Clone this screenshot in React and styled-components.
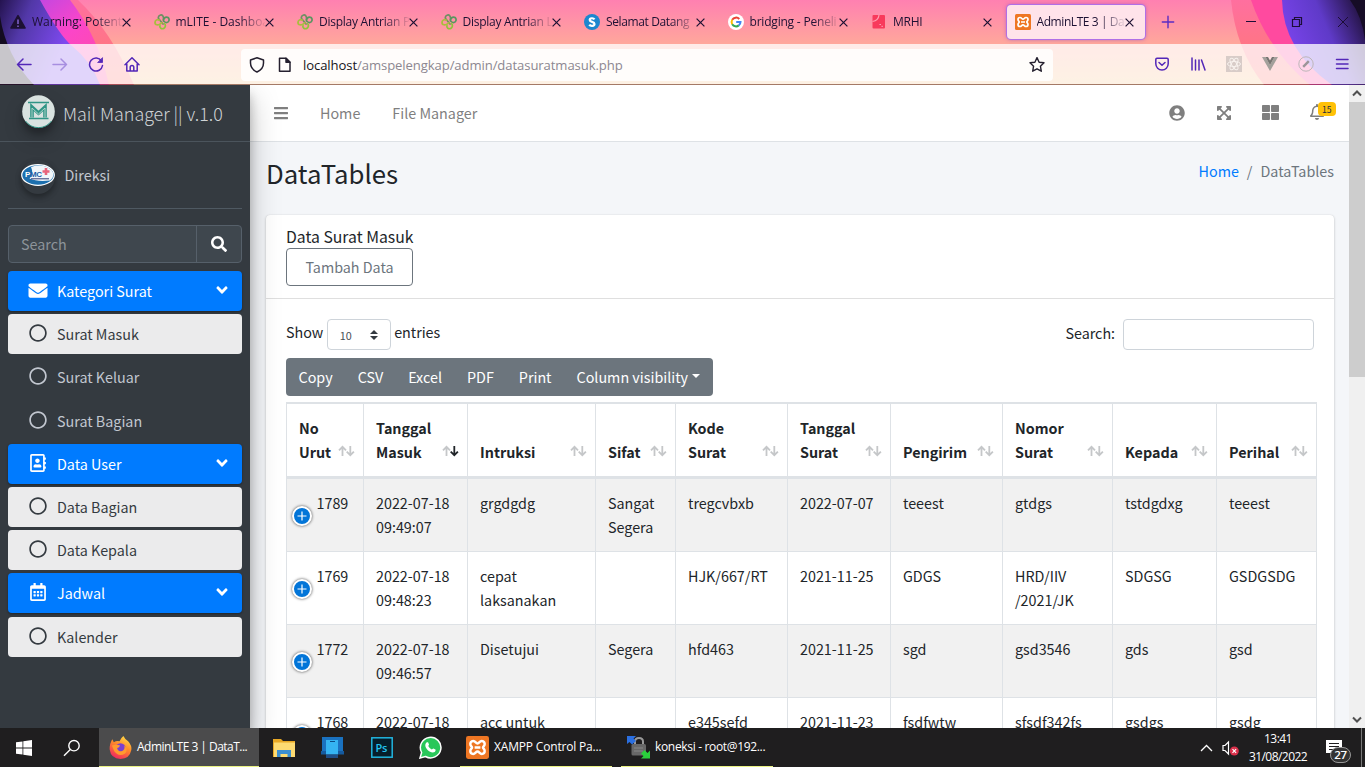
import React from "react";
import styled, { createGlobalStyle, css } from "styled-components";
import {
  FaEnvelope, FaRegAddressBook, FaRegCalendarAlt, FaRegCircle, FaAngleDown, FaSearch,
  FaBars, FaUserCircle, FaExpandArrowsAlt, FaThLarge, FaRegBell,
} from "react-icons/fa";

const sans = `"Noto Sans CJK SC", "Noto Sans", sans-serif`;
const ui = `"Open Sans", "Noto Sans", sans-serif`;

const Global = createGlobalStyle`
  *, *::before, *::after { box-sizing: border-box; }
  html, body { margin: 0; padding: 0; overflow: hidden; }
  body { font-family: ${sans}; font-size: 14.33px; line-height: 24px; color: #212529; }
  svg { display: block; flex: none; }
`;

const Screen = styled.div`
  width: 1365px; height: 767px; display: flex; flex-direction: column; overflow: hidden;
`;

/* ---------- browser chrome ---------- */
const Chrome = styled.header`
  position: relative; height: 85px; flex: none; font-family: ${ui}; overflow: hidden;
`;
const ThemeArt = styled.svg`position: absolute; inset: 0;`;
const TabStrip = styled.div`
  position: relative; height: 44px; display: flex; align-items: center; padding-left: 2px;
`;
const TabItem = styled.div`
  width: 139.5px; margin-right: 4px; height: 36px; flex: none; display: flex; align-items: center;
  padding: 0 11px 0 8px; border-radius: 4px; color: #1d1133;
  ${(p) => p.$active && css`
    width: 138.5px; height: 34px; margin: 0 1px 0 0; background: #ffe3ea;
    box-shadow: 0 0 0 1px #b06fe6, 0 0 4px rgba(120, 60, 200, .7);
  `}
`;
const TabTitle = styled.span`
  flex: 1; margin-left: 6px; white-space: nowrap; overflow: hidden; font-size: 12px; line-height: 18px;
  letter-spacing: ${(p) => p.$ls || "-0.25px"};
  mask-image: linear-gradient(to right, #000 calc(100% - 26px), transparent calc(100% + 2px));
`;
const NewTab = styled.div`width: 44px; display: flex; justify-content: center; color: #5b2cc4;`;
const WindowButtons = styled.div`
  margin-left: auto; display: flex; align-items: center; color: #1c0d36;
  svg { width: 46px; }
`;
const Toolbar = styled.div`
  position: relative; height: 40px; display: flex; align-items: center; background: rgba(255, 255, 255, .77);
  color: #5327b8;
`;
const NavButtons = styled.div`display: flex; gap: 20px; padding-left: 16px; width: 241px;`;
const UrlField = styled.div`
  width: 812px; height: 32px; border-radius: 4px; background: rgba(255, 255, 255, .84); display: flex;
  align-items: center; padding: 0 8px; color: #25202f; margin-top: 1px;
`;
const PageIcon = styled.span`margin-left: 12px;`;
const UrlText = styled.span`
  flex: 1; margin-left: 10px; font-size: 13.1px; line-height: 20px; color: #8c8790; letter-spacing: -0.09px;
  b { font-weight: 400; color: #15141a; }
`;
const ToolButtons = styled.div`
  display: flex; align-items: center; gap: 20px; margin-left: auto; padding-right: 15px;
`;

/* ---------- page ---------- */
const Page = styled.div`flex: 1; display: flex; min-height: 0; overflow: hidden;`;
const Sidebar = styled.aside`
  width: 250px; flex: none; background: #343a40; position: relative; z-index: 2; color: #c2c7d0;
  box-shadow: 0 14px 28px rgba(0, 0, 0, .25), 0 10px 10px rgba(0, 0, 0, .22);
`;
const Brand = styled.div`
  height: 57px; border-bottom: 1px solid #4b545c; display: flex; align-items: center; padding: 0 0 3px 22px;
  font-size: 17.9px; font-weight: 300; color: #d0d3d6;
  span { margin: 2px 0 0 8px; white-space: nowrap; letter-spacing: -0.03px; }
`;
const RoundLogo = styled.div`
  width: 33px; height: 33px; border-radius: 50%;
  box-shadow: 0 10px 20px rgba(0, 0, 0, .19), 0 6px 6px rgba(0, 0, 0, .23);
`;
const SideBody = styled.div`padding: 0 8px;`;
const UserPanel = styled.div`
  height: 67px; border-bottom: 1px solid #4f5962; display: flex; align-items: center; padding-left: 13px;
  margin-bottom: 16px;
  span { margin-left: 9.500px; }
`;
const Avatar = styled.div`
  width: 34px; height: 34px; border-radius: 50%; display: flex; padding-top: 4px; margin-top: 3px;
  box-shadow: 0 3px 6px rgba(0, 0, 0, .16), 0 3px 6px rgba(0, 0, 0, .23);
`;
const SideSearch = styled.div`
  height: 38px; border: 1px solid #56606a; border-radius: 4px; background: #3f474e; display: flex;
  margin-bottom: 8px; color: #8d949a;
  > span { flex: 1; padding: 6px 12px; }
  > div { width: 45px; border-left: 1px solid #56606a; display: flex; align-items: center; justify-content: center; color: #fff; }
`;
const tones = {
  blue: css`background: #007bff; color: #fff; box-shadow: 0 1px 3px rgba(0, 0, 0, .12), 0 1px 2px rgba(0, 0, 0, .24);`,
  light: css`background: #ebebec; color: #343a40;`,
  plain: css`color: #c2c7d0;`,
};
const MenuRow = styled.div`
  height: 40px; margin-bottom: 3.2px; border-radius: 4px; display: flex; align-items: center; padding: 0 11px 0 20px;
  ${(p) => tones[p.$tone]}
  > svg:first-child { margin-top: -2px; width: 20px; }
  > span { flex: 1; margin-left: 9px; }
  > svg:last-child:not(:first-child) { margin-top: -2px; }
`;

const Main = styled.main`flex: 1; min-width: 0; background: #f4f6f9; overflow: hidden;`;
const Navbar = styled.nav`
  height: 57px; background: #fff; border-bottom: 1px solid #dee2e6; display: flex; align-items: center;
  padding: 0 14px 0 23px; color: #7f7f7f;
`;
const NavLink = styled.span`margin-left: ${(p) => p.$gap}px;`;
const NavIcons = styled.div`margin-left: auto; display: flex; align-items: center; margin-top: -1px;`;
const NavIcon = styled.div`width: 47px; height: 24px; display: flex; justify-content: center; align-items: center;`;
const Bell = styled.div`position: relative; margin-left: 15px; width: 26px; height: 18px;`;
const Badge = styled.span`
  position: absolute; left: 9px; top: -2px; height: 14px; padding: 0 4px; border-radius: 4px; background: #ffc107;
  color: #1f2d3d; font-size: 8.6px; line-height: 14px;
`;
const PageHead = styled.div`
  height: 72px; padding: 14px 15px 0 16px; display: flex; justify-content: space-between; margin-bottom: 1px;
`;
const Title = styled.h1`margin: -1px 0 0; font-size: 25.75px; line-height: 35px; font-weight: 400;`;
const Crumbs = styled.div`
  color: #6c757d; line-height: 30px; a { color: #007bff; } i { font-style: normal; padding: 0 8px; }
`;
const Card = styled.section`
  margin: 0 15px 0 16px; height: 600px; background: #fff; border-radius: 4px;
  box-shadow: 0 0 1px rgba(0, 0, 0, .125), 0 1px 3px rgba(0, 0, 0, .2);
`;
const CardHead = styled.div`
  height: 84px; padding: 11px 20px 0; border-bottom: 1px solid #dfdfdf;
`;
const CardTitle = styled.div`font-size: 15.76px; line-height: 21px; margin-bottom: 1px;`;
const OutlineButton = styled.button`
  display: block; width: 127px; height: 38px; border: 1px solid #6c757d; border-radius: 4px; background: #fff;
  color: #6c757d; font: inherit; padding: 0;
`;
const CardBody = styled.div`padding: 20px;`;
const Controls = styled.div`
  display: flex; align-items: center; height: 31px; margin-bottom: 8px; letter-spacing: -0.04px;
  > span { margin-top: -5px; }
`;
const Select = styled.div`
  width: 64px; height: 31px; margin: 0 3.500px; border: 1px solid #ced4da; border-radius: 4px; display: flex;
  align-items: center; justify-content: space-between; padding: 0 12px; font-size: 10.8px; color: #495057;
`;
const SearchBox = styled.label`
  margin-left: auto; display: flex; align-items: center; gap: 8px;
  span { margin-top: -3px; }
  div { width: 191px; height: 31px; border: 1px solid #ced4da; border-radius: 4px; }
`;
const ButtonGroup = styled.div`
  display: inline-flex; height: 38px; border-radius: 4px; background: #6c757d; color: #fff; margin-bottom: 6px;
  vertical-align: top;
`;
const GroupButton = styled.div`
  padding: 7px 12.5px; display: flex; align-items: center; white-space: nowrap;
  &::after {
    content: ""; display: ${(p) => (p.$caret ? "block" : "none")}; margin: -2px 0 0 4px;
    border: 4.6px solid transparent; border-top-color: #fff; border-bottom: 0;
  }
`;
const Table = styled.table`
  width: 1031px; table-layout: fixed; border-spacing: 0; border-right: 1px solid #dee2e6;
`;
const Th = styled.th`
  width: ${(p) => p.$w}px; height: 77px; padding: 12px 8px 12px 12px; border-left: 1px solid #dee2e6;
  border-top: 2px solid #dee2e6; border-bottom: 3px solid #dee2e6; text-align: left; vertical-align: bottom;
  font-weight: 700;
`;
const HeadInner = styled.div`
  display: flex; justify-content: space-between; align-items: flex-end; white-space: pre;
  svg { margin-bottom: 7px; }
`;
const Tr = styled.tr`background: ${(p) => (p.$odd ? "#f1f1f1" : "#fff")};`;
const Td = styled.td`
  position: relative; height: ${(p) => (p.$first ? 72 : 73)}px; vertical-align: top; white-space: pre;
  padding: 12px 0 0 ${(p) => (p.$lead ? 29.5 : 12)}px; border-left: 1px solid #dee2e6;
  border-top: ${(p) => (p.$first ? 0 : 1)}px solid #dee2e6;
`;
const Expand = styled.span`
  position: absolute; left: 5px; top: 50%; margin-top: -9px; width: 20px; height: 20px; border-radius: 50%;
  border: 2px solid #fff; background: #0275d8; box-shadow: 0 0 3px #444; display: flex; align-items: center;
  justify-content: center;
`;

const Scrollbar = styled.div`
  width: 16px; flex: none; background: #f0f0f0; display: flex; flex-direction: column; align-items: center;
  justify-content: space-between;
`;
const Thumb = styled.div`width: 16px; height: 275px; background: #cdcdcd; margin-bottom: auto;`;
const ScrollArrow = styled.div`height: 17px; display: flex; align-items: center;`;

/* ---------- taskbar ---------- */
const Taskbar = styled.footer`
  height: 39px; flex: none; background: #1f1e1f; display: flex; color: #fff; font-family: ${ui}; font-size: 12px;
  letter-spacing: -0.3px;
`;
const TaskIcon = styled.div`width: ${(p) => p.$w || 49}px; display: flex; align-items: center; justify-content: center;`;
const Task = styled.div`
  width: ${(p) => p.$w}px; margin-right: ${(p) => p.$gap || 0}px; padding: 0 0 0 ${(p) => p.$pad}px; display: flex;
  align-items: center; background: ${(p) => (p.$active ? "#4b4b4c" : "transparent")};
  border-bottom: 1px solid #e9f284; white-space: nowrap;
  span { margin-left: 5px; letter-spacing: ${(p) => p.$ls}px; }
`;
const Tray = styled.div`
  margin-left: auto; display: flex; align-items: center;
  > svg:first-child { margin-right: 9px; }
`;
const Clock = styled.div`
  width: 70px; text-align: center; line-height: 18px; margin: 0 13px 0 3px; letter-spacing: -0.55px;
`;
const Notice = styled.div`
  position: relative; width: 36px; height: 39px; padding-top: 12px; border-right: 1px solid #777;
`;
const NoticeCount = styled.span`
  position: absolute; left: 4px; top: 19px; width: 21px; height: 16px; border-radius: 8px; border: 1px solid #999;
  background: #333; font-weight: 600; font-size: 11.5px; line-height: 14px; text-align: center;
`;

const Art = () => (
  <ThemeArt width="1365" height="85" viewBox="0 0 1365 85">
    <defs>
      <linearGradient id="sky" x1="0" y1="0" x2="0" y2="1">
        <stop offset="0" stopColor="#ff80b1" /><stop offset=".5" stopColor="#ffa69c" /><stop offset="1" stopColor="#f6c58a" />
      </linearGradient>
      <linearGradient id="orange" x1="0" y1="0" x2="0" y2="1">
        <stop offset="0" stopColor="#ff6f9f" /><stop offset="1" stopColor="#ff7a70" />
      </linearGradient>
      <linearGradient id="mag" x1="0" y1="0" x2="1" y2="1">
        <stop offset="0" stopColor="#a648ee" /><stop offset=".5" stopColor="#fb45c9" /><stop offset="1" stopColor="#ff4f9a" />
      </linearGradient>
      <linearGradient id="pur" gradientUnits="userSpaceOnUse" x1="0" y1="0" x2="70" y2="30">
        <stop offset="0" stopColor="#24134f" /><stop offset=".4" stopColor="#5238a8" /><stop offset="1" stopColor="#7d49ee" />
      </linearGradient>
      <linearGradient id="purR" gradientUnits="userSpaceOnUse" x1="1282" y1="34" x2="1362" y2="0">
        <stop offset="0" stopColor="#7a44ec" /><stop offset=".5" stopColor="#5f3ac8" /><stop offset=".95" stopColor="#22123f" />
      </linearGradient>
    </defs>
    <rect width="1365" height="85" fill="url(#sky)" />
    <path d="M0 0H78Q112 32 134 85H0Z" fill="url(#orange)" />
    <path d="M0 0H70Q98 36 109 85H0Z" fill="url(#mag)" />
    <path d="M0 0H40Q60 36 72 46Q92 62 100 85H0Z" fill="url(#pur)" />
    <path d="M0 16Q6 56 34 85H0Z" fill="#140c20" />
    <path d="M1231 0Q1236 50 1264 85H1365V0Z" fill="url(#orange)" />
    <path d="M1251 0Q1268 50 1310 85H1365V0Z" fill="#ff4a9f" />
    <path d="M1282 0Q1283 50 1332 85H1365V0Z" fill="url(#purR)" />
    <path d="M1350 0Q1362 16 1365 40V0Z" fill="#160c26" />
    <rect y="84" width="1365" height="1" fill="#40203a" opacity=".45" />
  </ThemeArt>
);

const X = ({ s = 9 }) => (
  <svg width={s} height={s} viewBox="0 0 9 9" stroke="currentColor" strokeWidth="1.2"><path d="M.6 .6l7.8 7.8M8.400 .6L.6 8.400" /></svg>
);
const Icon = ({ children, size = 16, ...r }) => (
  <svg width={size} height={size} viewBox="0 0 16 16" fill="none" stroke="currentColor" strokeWidth="1.3" strokeLinecap="round" strokeLinejoin="round" {...r}>{children}</svg>
);
const Clover = () => (
  <Icon strokeWidth="1.7">
    <path d="M9 10L5.300 5.500A2.500 2.500 0 0 1 6 1.200C8.200 .2 9.600 2 9.500 4.500V6.500" stroke="#6f8f63" />
    <path d="M9.500 5.500C10 3.500 12.500 2.500 14 3.500C15.800 5 15.300 8 13 8.500C11.500 8.800 10.500 8 9.500 7" stroke="#5a9560" />
    <path d="M5.500 6.200C3 4.800 .8 6.500 1 9C1.300 11 3.800 11.300 5.800 10.200L8 8.800" stroke="#a9bd3e" />
    <path d="M10.500 9.500C12 11 11.500 13.500 9.800 14.400C7.500 15.400 5.500 14 6 11.800" stroke="#8fc43a" />
  </Icon>
);
const Xampp = ({ size = 16 }) => (
  <svg width={size} height={size} viewBox="0 0 16 16">
    <rect width="16" height="16" rx="1.500" fill="#ee7623" />
    <path d="M5 3.500C3.300 3.500 3 5 3 5.500C3 7 4.200 7.200 4.200 8S3 9 3 10.500C3 11.500 3.500 12.500 5 12.500S6.800 10.800 8 10.800S9.500 12.500 11 12.500S13 11.500 13 10.500C13 9 11.800 8.800 11.800 8S13 7 13 5.500C13 5 12.700 3.500 11 3.500S9.200 5.200 8 5.200S6.700 3.500 5 3.500Z M6 8H10" fill="none" stroke="#fff" strokeWidth="1.700" strokeLinejoin="round" />
  </svg>
);
const favicons = {
  warn: <svg width="16" height="16" viewBox="0 0 16 16"><path d="M8 1.700L15 14H1Z" fill="#1d1133" stroke="#1d1133" strokeWidth="1.600" strokeLinejoin="round" /><path d="M8 5.500v4.500M8 11.500v1.500" stroke="#8a68dc" strokeWidth="1.400" /></svg>,
  clover: <Clover />,
  s: <svg width="16" height="16" viewBox="0 0 16 16"><circle cx="8" cy="8" r="8" fill="#1c87cf" /><path d="M10.500 5.300C9.500 3.800 5.700 3.800 5.700 6C5.700 8.200 10.500 7.600 10.500 10C10.500 12.300 6.300 12.300 5.300 10.600" fill="none" stroke="#fff" strokeWidth="2.200" /></svg>,
  g: <svg width="16" height="16" viewBox="0 0 16 16" fill="none" strokeWidth="2"><circle cx="8" cy="8" r="8" fill="#fff" /><path d="M11.300 5A4.500 4.500 0 0 0 4.200 5.800" stroke="#ea4335" /><path d="M4.200 5.800A4.500 4.500 0 0 0 4.200 10.300" stroke="#fbbc05" /><path d="M4.200 10.300A4.500 4.500 0 0 0 10.800 11.400" stroke="#34a853" /><path d="M10.800 11.400A4.500 4.500 0 0 0 12.500 8H8.200" stroke="#4285f4" /></svg>,
  m: <svg width="16" height="16" viewBox="0 0 16 16"><rect x="1.500" y="1" width="12.500" height="13.500" rx="1" fill="#f83a5c" /><path d="M1.500 7.500Q7.500 6.500 8 1" fill="none" stroke="#ff9db0" strokeWidth="1.200" /><path d="M8.500 10.500h1.300M10.500 12.300h1.300" stroke="#ffb5c2" strokeWidth="1" /></svg>,
  x: <Xampp />,
};
const tabs = [
  ["warn", "Warning: Potenti", "-0.02px"], ["clover", "mLITE - Dashboard", "-0.02px"], ["clover", "Display Antrian Pe"], ["clover", "Display Antrian Lo"],
  ["s", "Selamat Datang", "-0.38px"], ["g", "bridging - Peneli", "-0.2px"], ["m", "MRHI"], ["x", "AdminLTE 3 | DataTables", "-0.42px"],
];

const Sort = ({ desc }) => (
  <svg width="17" height="12" viewBox="0 0 17 12" fill="none" strokeWidth="1.800">
    <path d="M4.500 11V2.200M1 5.400L4.500 1.800L8 5.400" stroke="#c5c7c9" />
    <path d="M12.300 1V9.800M8.700 6.600L12.300 10.200L15.900 6.600" stroke={desc ? "#212529" : "#c5c7c9"} />
  </svg>
);

const menu = [
  ["blue", <FaEnvelope size={19} />, "Kategori Surat"],
  ["light", <FaRegCircle size={18} />, "Surat Masuk"],
  ["plain", <FaRegCircle size={18} />, "Surat Keluar"],
  ["plain", <FaRegCircle size={18} />, "Surat Bagian"],
  ["blue", <FaRegAddressBook size={18} />, "Data User"],
  ["light", <FaRegCircle size={18} />, "Data Bagian"],
  ["light", <FaRegCircle size={18} />, "Data Kepala"],
  ["blue", <FaRegCalendarAlt size={18} />, "Jadwal"],
  ["light", <FaRegCircle size={18} />, "Kalender"],
];
const columns = [
  [77, "No\nUrut"], [104, "Tanggal\nMasuk"], [128, "Intruksi"], [80, "Sifat"], [112, "Kode\nSurat"],
  [103, "Tanggal\nSurat"], [112, "Pengirim"], [110, "Nomor\nSurat"], [104, "Kepada"], [100, "Perihal"],
];
const rows = [
  ["1789", "2022-07-18\n09:49:07", "grgdgdg", "Sangat\nSegera", "tregcvbxb", "2022-07-07", "teeest", "gtdgs", "tstdgdxg", "teeest"],
  ["1769", "2022-07-18\n09:48:23", "cepat\nlaksanakan", "", "HJK/667/RT", "2021-11-25", "GDGS", "HRD/IIV\n/2021/JK", "SDGSG", "GSDGSDG"],
  ["1772", "2022-07-18\n09:46:57", "Disetujui", "Segera", "hfd463", "2021-11-25", "sgd", "gsd3546", "gds", "gsd"],
  ["1768", "2022-07-18", "acc untuk", "", "e345sefd", "2021-11-23", "fsdfwtw", "sfsdf342fs", "gsdgs", "gsdg"],
];

export default function App() {
  return (
    <Screen>
      <Global />
      <Chrome>
        <Art />
        <TabStrip>
          {tabs.map(([icon, title, ls], i) => (
            <TabItem key={i} $active={i === 7}>{favicons[icon]}<TabTitle $ls={ls}>{title}</TabTitle><X /></TabItem>
          ))}
          <NewTab><Icon size={14} strokeWidth="1.600"><path d="M8 1.500v13M1.500 8h13" /></Icon></NewTab>
          <WindowButtons>
            <svg height="12" viewBox="0 0 46 12"><path d="M19 5.500h10" stroke="currentColor" /></svg>
            <svg height="12" viewBox="0 0 46 12" fill="none" stroke="currentColor" strokeWidth="1.200"><path d="M19.500 3.500h7v7h-7zM21.500 3.500v-2h7v7h-2" /></svg>
            <svg height="12" viewBox="0 0 46 12"><path d="M19 1l10 10M29 1L19 11" stroke="currentColor" /></svg>
          </WindowButtons>
        </TabStrip>
        <Toolbar>
          <NavButtons>
            <Icon strokeWidth="1.500"><path d="M15 8.500H1.500M7 3L1.500 8.500L7 14" /></Icon>
            <Icon strokeWidth="1.500" opacity=".4"><path d="M1 8.500h13.500M9 3L14.500 8.500L9 14" /></Icon>
            <Icon strokeWidth="1.500"><path d="M13.500 5A6.500 6.500 0 1 0 14.500 9.500" /><path d="M14.500 2v4.500H10Z" fill="currentColor" strokeWidth=".8" /></Icon>
            <Icon strokeWidth="1.500"><path d="M1 8.800L8 1.800L15 8.800M2.800 7.800V15H13.200V7.800M6.200 15V11.300Q6.200 9.500 8 9.500T9.800 11.300V15" /></Icon>
          </NavButtons>
          <UrlField>
            <Icon strokeWidth="1.500"><path d="M8 .8L14.500 3V6Q14.500 12 8 15Q1.500 12 1.500 6V3Z" /></Icon>
            <PageIcon><Icon strokeWidth="1.500"><path d="M2.500 1.200h6.500L13 5.200V14.200H2.500Z" /><path d="M9 1.200v4h4Z" fill="currentColor" /></Icon></PageIcon>
            <UrlText><b>localhost</b>/amspelengkap/admin/datasuratmasuk.php</UrlText>
            <Icon strokeWidth="1.400"><path d="M8 .6l2.100 4.600 4.900.6-3.600 3.400.9 5L8 11.800l-4.300 2.400.9-5L1 5.800l4.900-.6Z" /></Icon>
          </UrlField>
          <ToolButtons>
            <Icon strokeWidth="1.500"><path d="M3 2.300h10Q14.200 2.300 14.200 3.500v4.300A6.200 6.200 0 0 1 1.800 7.800V3.500Q1.800 2.300 3 2.300ZM5 6.500L8 9.300L11 6.500" /></Icon>
            <Icon strokeWidth="1.500"><path d="M2 2v12M5.500 4v10M9 4v10M11.500 4L15 14" /></Icon>
            <svg width="16" height="16" viewBox="0 0 16 16" fill="none" stroke="#f8f2ee"><rect width="16" height="16" fill="#d8ccc8" stroke="none" /><ellipse cx="8" cy="8" rx="6.500" ry="2.500" /><ellipse cx="8" cy="8" rx="6.500" ry="2.500" transform="rotate(60 8 8)" /><ellipse cx="8" cy="8" rx="6.500" ry="2.500" transform="rotate(120 8 8)" /></svg>
            <svg width="16" height="14" viewBox="0 0 16 14"><path d="M0 0h3.500L8 8l4.500-8H16L8 14Z" fill="#a3a09b" /><path d="M3.500 0H6l2 3.500L10 0h2.500L8 8Z" fill="#777672" /></svg>
            <svg width="16" height="16" viewBox="0 0 16 16"><circle cx="8" cy="8" r="7.200" fill="none" stroke="#bdb6b8" /><path d="M5.200 10.800L10.800 5.200" stroke="#9b9598" strokeWidth="2.400" /></svg>
            <Icon strokeWidth="1.500"><path d="M2.500 3.500h11.500M2.500 8h11.500M2.500 12.500h11.500" /></Icon>
          </ToolButtons>
        </Toolbar>
      </Chrome>

      <Page>
        <Sidebar>
          <Brand>
            <RoundLogo>
              <svg width="33" height="33" viewBox="0 0 33 33"><circle cx="16.500" cy="16.500" r="16.300" fill="#d9e2e0" /><path d="M6 7.500h21M7 23.500h19.500" stroke="#2f9485" strokeWidth="1.500" /><path d="M10 22.500V12L16.500 18L23 12V22.500" fill="none" stroke="#2f9485" strokeWidth="3.600" /><path d="M10 22.500V13L16.500 19L23 13V22.500" fill="none" stroke="#bcd9d3" strokeWidth=".9" /><path d="M3.500 26A16 16 0 0 0 29.500 26" fill="none" stroke="#2f9485" /></svg>
            </RoundLogo>
            <span>Mail Manager || v.1.0</span>
          </Brand>
          <SideBody>
            <UserPanel>
              <Avatar>
                <svg width="34" height="22" viewBox="0 0 34 22"><ellipse cx="17" cy="11" rx="16.300" ry="10.400" fill="#1c6fae" stroke="#fff" strokeWidth="1.200" /><path d="M10 3Q22 -1 30.500 6Q35 12 29 16.500Q16 18 8.500 14.500Q13 10 10 3Z" fill="#f1f6fa" /><text x="4" y="12.800" fontFamily="Liberation Sans, sans-serif" fontWeight="700" fontSize="8" textLength="17"><tspan fill="#fff">P</tspan><tspan fill="#1c5fa8">MC</tspan></text><path d="M25 4v7M21.500 7.500h7" stroke="#e8647c" strokeWidth="2.600" /><path d="M10 14.800h18" stroke="#333f75" strokeWidth="1" /></svg>
              </Avatar>
              <span>Direksi</span>
            </UserPanel>
            <SideSearch><span>Search</span><div><FaSearch size={16} /></div></SideSearch>
            {menu.map(([tone, icon, label]) => (
              <MenuRow key={label} $tone={tone}>{icon}<span>{label}</span>{tone === "blue" && <FaAngleDown size={18} />}</MenuRow>
            ))}
          </SideBody>
        </Sidebar>

        <Main>
          <Navbar>
            <FaBars size={16} />
            <NavLink $gap={31}>Home</NavLink>
            <NavLink $gap={32}>File Manager</NavLink>
            <NavIcons>
              <NavIcon><FaUserCircle size={16} /></NavIcon>
              <NavIcon><FaExpandArrowsAlt size={16} /></NavIcon>
              <NavIcon><FaThLarge size={17} /></NavIcon>
              <Bell><FaRegBell size={16} /><Badge>15</Badge></Bell>
            </NavIcons>
          </Navbar>
          <PageHead>
            <Title>DataTables</Title>
            <Crumbs><a>Home</a><i>/</i>DataTables</Crumbs>
          </PageHead>
          <Card>
            <CardHead>
              <CardTitle>Data Surat Masuk</CardTitle>
              <OutlineButton>Tambah Data</OutlineButton>
            </CardHead>
            <CardBody>
              <Controls>
                <span>Show</span>
                <Select>10<svg width="8" height="10" viewBox="0 0 8 10"><path d="M0 4L4 0l4 4ZM0 6l4 4 4-4Z" fill="#343a40" /></svg></Select>
                <span>entries</span>
                <SearchBox><span>Search:</span><div /></SearchBox>
              </Controls>
              <ButtonGroup>
                {["Copy", "CSV", "Excel", "PDF", "Print", "Column visibility"].map((b) => (
                  <GroupButton key={b} $caret={b === "Column visibility"}>{b}</GroupButton>
                ))}
              </ButtonGroup>
              <Table>
                <thead>
                  <tr>{columns.map(([w, label], i) => (
                    <Th key={i} $w={w}><HeadInner>{label}<Sort desc={i === 1} /></HeadInner></Th>
                  ))}</tr>
                </thead>
                <tbody>
                  {rows.map((r, ri) => (
                    <Tr key={ri} $odd={ri % 2 === 0}>{r.map((c, ci) => (
                      <Td key={ci} $first={ri === 0} $lead={ci === 0}>
                        {ci === 0 && <Expand><svg width="10" height="10" viewBox="0 0 10 10"><path d="M5 .5v9M.5 5h9" stroke="#fff" strokeWidth="1.200" /></svg></Expand>}
                        {c}
                      </Td>
                    ))}</Tr>
                  ))}
                </tbody>
              </Table>
            </CardBody>
          </Card>
        </Main>
        <Scrollbar>
          <ScrollArrow><svg width="10" height="7" viewBox="0 0 10 7"><path d="M1 5.500L5 1.500L9 5.500" fill="none" stroke="#505050" strokeWidth="2" /></svg></ScrollArrow>
          <Thumb />
          <ScrollArrow><svg width="10" height="7" viewBox="0 0 10 7"><path d="M1 1.500L5 5.500L9 1.500" fill="none" stroke="#505050" strokeWidth="2" /></svg></ScrollArrow>
        </Scrollbar>
      </Page>

      <Taskbar>
        <TaskIcon $w={48}><svg width="16" height="16" viewBox="0 0 16 16" fill="#fff"><path d="M0 2.300L6.500 1.400V7.600H0ZM7.300 1.300L16 0V7.600H7.300ZM0 8.400H6.500V14.600L0 13.700ZM7.300 8.400H16V16L7.300 14.700Z" /></svg></TaskIcon>
        <TaskIcon $w={48}><svg width="18" height="18" viewBox="0 0 18 18" fill="none" stroke="#fff" strokeWidth="1.400"><circle cx="11" cy="6.700" r="5.200" /><path d="M7.300 10.600L1 16.700" /></svg></TaskIcon>
        <TaskIcon $w={3} />
        <Task $w={160} $pad={10} $active $ls={-0.52}>
          <svg width="23" height="23" viewBox="0 0 24 24">
            <defs><linearGradient id="ff" x1=".8" y1="0" x2=".3" y2="1"><stop offset="0" stopColor="#ffe14a" /><stop offset=".45" stopColor="#ff8a2a" /><stop offset="1" stopColor="#f0275f" /></linearGradient></defs>
            <path d="M15 0Q17 4 20 5.500Q24 10 23.300 14.500Q21.500 23.500 12 24Q2 23.500 .7 14Q.5 8 3.500 3.500L5 6.500Q8 4.500 11 5.500Q12.500 2 15 0Z" fill="url(#ff)" />
            <circle cx="12" cy="13" r="5.500" fill="#7a3fd0" /><path d="M3 10Q8 8 11.500 10Q11 12.500 8.500 12.500Q9 16 13 16Q17 15 16 10Q21 14 16.500 18.500Q10 22 5.500 16Z" fill="#ff9a2e" />
          </svg>
          <span>AdminLTE 3 | DataT...</span>
        </Task>
        <TaskIcon><svg width="22" height="18" viewBox="0 0 22 18"><path d="M0 0h8l2 2h12v16H0Z" fill="#e8a825" /><path d="M1 3.500h21V18H1Z" fill="#fddb73" /><path d="M4 18v-7h14v7h-3.500v-3h-7v3Z" fill="#3c8fd0" /></svg></TaskIcon>
        <TaskIcon><svg width="23" height="22" viewBox="0 0 23 22"><path d="M1 0h21v17H1Z" fill="#1a72c0" /><path d="M0 14h23v3.500H0Z" fill="#155a9e" /><path d="M5 3h12v14.500H5Z" fill="#35b4f2" /><path d="M5 17.500h12V21H5Z" fill="#1f4e86" /><path d="M9 4.500h5" stroke="#0c4d86" /></svg></TaskIcon>
        <TaskIcon><svg width="22" height="21" viewBox="0 0 22 21"><rect x=".8" y=".8" width="20.400" height="19.400" fill="#061e2b" stroke="#22b5df" strokeWidth="1.500" /><text x="4.500" y="14.500" fontFamily="Open Sans, sans-serif" fontWeight="600" fontSize="11" fill="#22c3f0">Ps</text></svg></TaskIcon>
        <TaskIcon><svg width="23" height="23" viewBox="0 0 23 23"><path d="M1 22L2.600 16.500A10.300 10.300 0 1 1 6.500 20.500Z" fill="#29c75a" stroke="#fff" strokeWidth="1.500" /><path d="M7.500 6.500C8 6 9 6 9.200 6.600L10 8.500C10.200 9 9.200 9.700 9.300 10C10 11.600 11.200 12.700 12.800 13.400C13.200 13.500 13.900 12.300 14.400 12.500L16.400 13.500C17 14 16.300 15.500 15.700 16C12 18 6 13 6.300 9C6.400 7.700 7 7 7.500 6.500Z" fill="#fff" /></svg></TaskIcon>
        <TaskIcon $w={5} />
        <Task $w={152} $gap={9} $pad={6} $ls={-0.18}><Xampp size={23} /><span>XAMPP Control Pa...</span></Task>
        <Task $w={152} $pad={6} $ls={-0.33}>
          <svg width="23" height="23" viewBox="0 0 23 23"><path d="M8 9V5.500Q8 2 12 2T16 5.500V9" fill="none" stroke="#999" strokeWidth="2" /><rect x="4.500" y="8" width="14.500" height="11.500" rx="1.500" fill="#686868" /><path d="M7 12h9M7 15h9" stroke="#888" /><path d="M0 0h9L6.500 2.500L9 5L5 8.500L2.500 6L0 8Z" fill="#2b6fe0" /><path d="M23 22.500h-9l2.500-2.500L14 17.500L17.500 14L20.500 17L23 14.500Z" fill="#2bd13c" /></svg>
          <span>koneksi - root@192...</span>
        </Task>
        <Tray>
          <svg width="13" height="8" viewBox="0 0 13 8"><path d="M1 7L6.500 1.500L12 7" fill="none" stroke="#fff" strokeWidth="1.300" /></svg>
          <svg width="18" height="16" viewBox="0 0 18 16"><path d="M1 5.500h2L6.500 2v12L3 10.500H1Z" fill="none" stroke="#fff" strokeWidth="1.200" /><circle cx="12.300" cy="11" r="4.500" fill="#d9304a" /><path d="M10.500 9.200l3.600 3.600M14.100 9.200l-3.600 3.600" stroke="#fff" strokeWidth="1.200" /></svg>
          <Clock>13:41<br />31/08/2022</Clock>
          <Notice>
            <svg width="16" height="18" viewBox="0 0 16 18"><path d="M0 0h16v13h-3.500v4L8.500 13H0Z" fill="#fff" /><path d="M3 3.500h10M3 6.500h10M3 9.500h7" stroke="#1f1e1f" /></svg>
            <NoticeCount>27</NoticeCount>
          </Notice>
          <TaskIcon $w={3} />
        </Tray>
      </Taskbar>
    </Screen>
  );
}
